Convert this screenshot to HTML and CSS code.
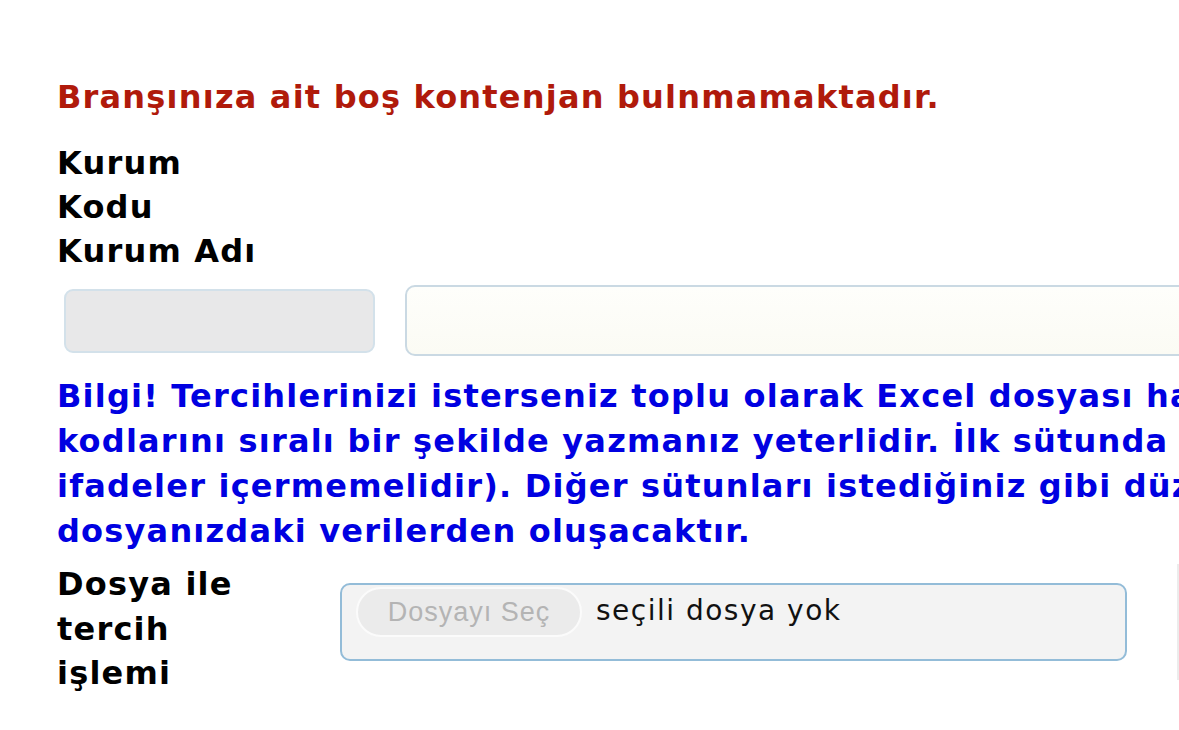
FILE: index.html
```html
<!DOCTYPE html>
<html lang="tr">
<head>
<meta charset="utf-8">
<title>Tercih</title>
<link rel="stylesheet" href="styles.css">
</head>
<body>
<div class="page">
  <h3 class="alert">Branşınıza ait boş kontenjan bulnmamaktadır.</h3>
  <div class="labels">
    <div class="lbl">Kurum Kodu</div>
    <div class="lbl">Kurum Adı</div>
  </div>
  <div class="inputs">
    <input class="code-input" type="text" disabled>
    <input class="name-input" type="text">
  </div>
  <p class="info">Bilgi! Tercihlerinizi isterseniz toplu olarak Excel dosyası hazırlayarak da yükleyebilirsiniz. Bunun için Excel dosyasının ilk sütununa kurum<br>kodlarını sıralı bir şekilde yazmanız yeterlidir. İlk sütunda kurum kodları dışında başka bilgi bulunmamalıdır (başlık, açıklama gibi<br>ifadeler içermemelidir). Diğer sütunları istediğiniz gibi düzenleyebilirsiniz. Tercih listeniz sadece yüklediğiniz<br>dosyanızdaki verilerden oluşacaktır.</p>
  <div class="file-row">
    <div class="file-label">Dosya ile tercih işlemi</div>
    <div class="file-box">
      <span class="file-btn">Dosyayı Seç</span>
      <span class="file-name">seçili dosya yok</span>
    </div>
    <div class="side-edge"></div>
  </div>
</div>
</body>
</html>
```

FILE: styles.css
```css
html, body {
  margin: 0;
  padding: 0;
  background: #ffffff;
  overflow: hidden;
}
body {
  width: 1179px;
  height: 730px;
  font-family: "DejaVu Sans", Verdana, sans-serif;
}
.page {
  padding: 75px 0 0 57px;
}
.alert {
  margin: 0;
  font-size: 32px;
  letter-spacing: 1.2px;
  line-height: 44px;
  font-weight: bold;
  color: #b01a0b;
  white-space: nowrap;
}
.labels {
  margin-top: 22px;
  width: 215px;
}
.lbl {
  font-size: 32px;
  letter-spacing: 1.2px;
  line-height: 44px;
  font-weight: bold;
  color: #000;
}
.inputs {
  display: flex;
  align-items: center;
  margin-top: 12px;
  height: 71px;
}
.code-input {
  box-sizing: border-box;
  margin: 0 0 0 7px;
  width: 311px;
  height: 64px;
  background: #e8e8e9;
  border: 2px solid #d3e1ea;
  border-radius: 9px;
  flex: none;
}
.name-input {
  box-sizing: border-box;
  margin: 0 0 0 30px;
  width: 900px;
  height: 71px;
  background: linear-gradient(#fefefb, #fbfbf4);
  border: 2px solid #cad9e3;
  border-radius: 10px;
  flex: none;
}
.info {
  margin: 18px 0 0 0;
  font-size: 32px;
  letter-spacing: 1.2px;
  line-height: 45px;
  font-weight: bold;
  color: #0000e1;
  white-space: nowrap;
}
.file-row {
  display: flex;
  align-items: flex-start;
  margin-top: 8px;
}
.file-label {
  width: 200px;
  flex: none;
  font-size: 32px;
  letter-spacing: 1.2px;
  line-height: 44.5px;
  font-weight: bold;
  color: #000;
}
.file-box {
  box-sizing: border-box;
  flex: none;
  margin: 21px 0 0 83px;
  width: 787px;
  height: 78px;
  background: #f3f3f3;
  border: 2px solid #93bcd8;
  border-radius: 10px;
  display: flex;
  align-items: flex-start;
  padding: 2px 0 0 14px;
}
.file-btn {
  box-sizing: border-box;
  width: 226px;
  height: 50px;
  text-align: center;
  border: 2px solid #fbfbfb;
  border-radius: 25px;
  background: #ebebeb;
  color: #b4b4b4;
  font-family: "Liberation Sans", Arial, sans-serif;
  font-size: 27px;
  letter-spacing: 1px;
  line-height: 46px;
}
.file-name {
  margin-left: 14px;
  font-size: 28px;
  letter-spacing: 1.5px;
  line-height: 48px;
  color: #111;
}
.side-edge {
  flex: none;
  margin-left: 50px;
  margin-top: 2px;
  height: 116px;
  border-left: 2px solid #ececec;
}
```
